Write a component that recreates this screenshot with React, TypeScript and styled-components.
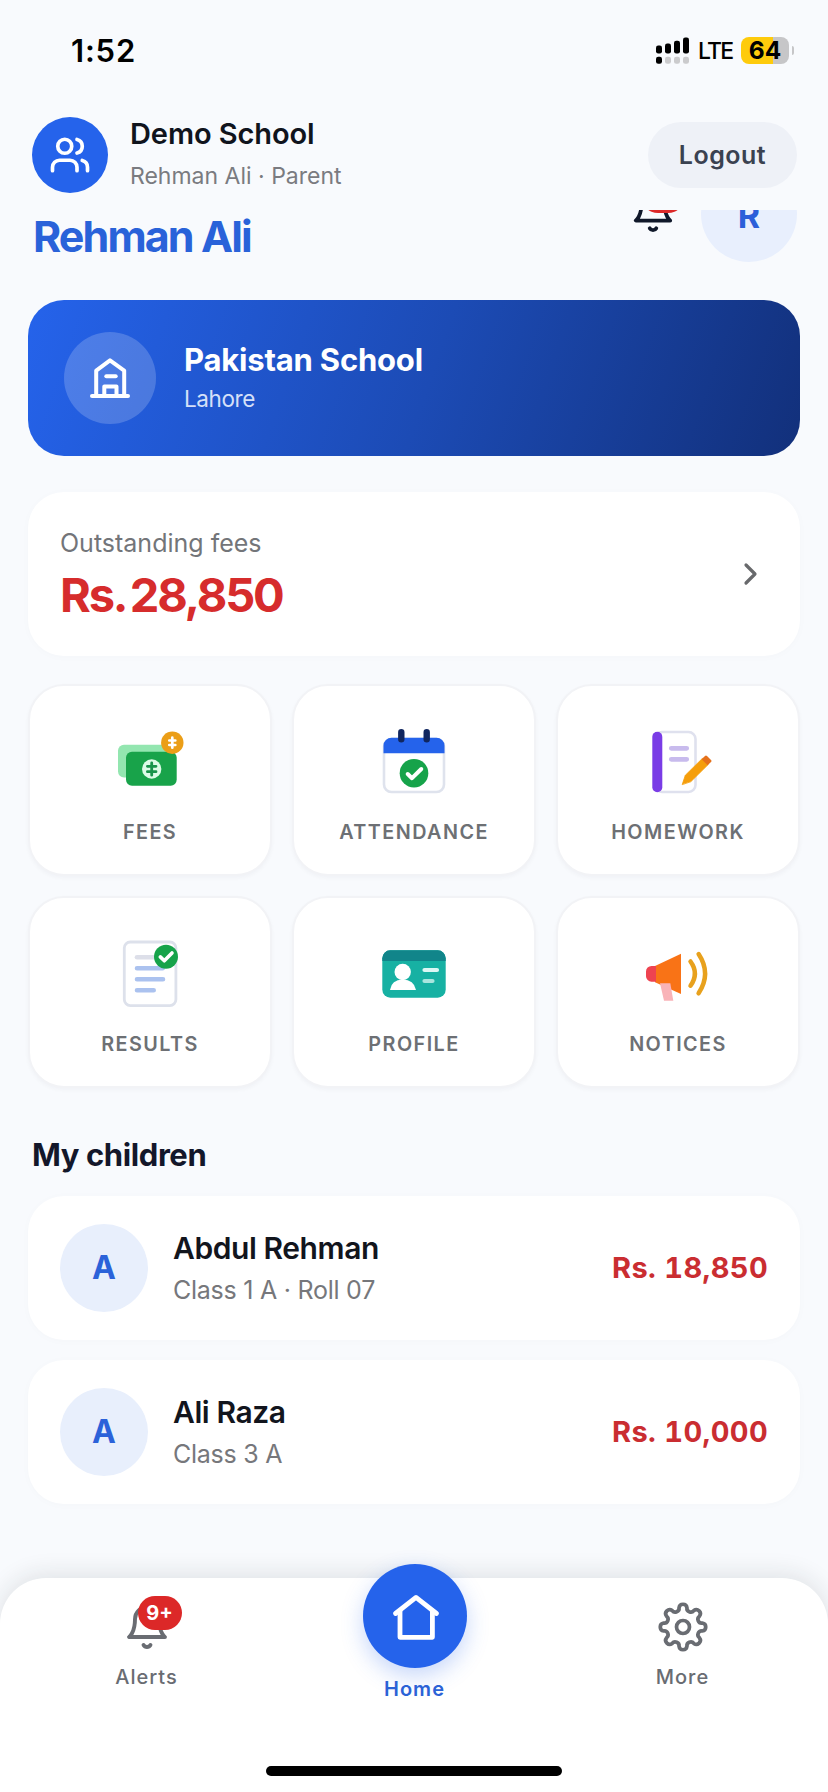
import React from 'react';
import styled, { createGlobalStyle } from 'styled-components';

const GlobalStyle = createGlobalStyle`
  *, *::before, *::after { box-sizing: border-box; }
  body {
    margin: 0;
    background: #f8fafd;
    font-family: Inter, 'Liberation Sans', sans-serif;
    -webkit-font-smoothing: antialiased;
  }
  svg { display: block; flex: none; overflow: visible; }
`;

const Screen = styled.div`
  display: flex;
  flex-direction: column;
  width: 828px;
  height: 1792px;
  overflow: hidden;
  background: #f8fafd;
`;

/* ---------- status bar ---------- */

const StatusBar = styled.div`
  display: flex;
  align-items: center;
  flex: none;
  height: 100px;
  padding: 0 34px 0 71px;
  color: #000;
`;

const Clock = styled.span`
  flex: 1;
  font-size: 31px;
  font-weight: 600;
  letter-spacing: 0.8px;
`;

const Carrier = styled.span`
  width: 43px;
  margin-left: 8px;
  padding-top: 1px;
  font-size: 23px;
  font-weight: 500;
  letter-spacing: -1.8px;
`;

const Battery = styled.div`
  width: 48px;
  height: 27px;
  border-radius: 8px;
  background: linear-gradient(90deg, #fecb0c 66%, #c6c6c8 66%);
  font-size: 24.5px;
  font-weight: 700;
  line-height: 27px;
  text-align: center;
`;

const BatteryTip = styled.div`
  width: 2.5px;
  height: 9px;
  margin-left: 2.5px;
  border-radius: 0 3px 3px 0;
  background: #c6c6c8;
`;

/* ---------- account header ---------- */

const Header = styled.header`
  display: flex;
  align-items: center;
  flex: none;
  height: 110px;
  padding: 0 31px 0 32px;
`;

const Disc = styled.div<{ $size: number; $bg: string }>`
  display: flex;
  align-items: center;
  justify-content: center;
  flex: none;
  width: ${(p) => p.$size}px;
  height: ${(p) => p.$size}px;
  border-radius: 50%;
  background: ${(p) => p.$bg};
`;

const Stack = styled.div<{ $gap: number; $lift?: number; $drop?: number }>`
  display: flex;
  flex-direction: column;
  flex: 1;
  margin-left: ${(p) => p.$gap}px;
  padding-top: ${(p) => p.$drop ?? 0}px;
  padding-bottom: ${(p) => p.$lift ?? 0}px;
`;

const Text = styled.span<{
  $size: number;
  $line: number;
  $color: string;
  $weight?: number;
  $track?: number;
}>`
  font-size: ${(p) => p.$size}px;
  line-height: ${(p) => p.$line}px;
  font-weight: ${(p) => p.$weight ?? 400};
  letter-spacing: ${(p) => p.$track ?? 0}px;
  color: ${(p) => p.$color};
  white-space: nowrap;
`;

const LogoutButton = styled.button`
  width: 149px;
  height: 66px;
  padding: 0;
  border: 0;
  border-radius: 33px;
  background: #eef1f7;
  color: #3a4250;
  font: 600 25px Inter, sans-serif;
  letter-spacing: 0.5px;
`;

/* ---------- scrolling content ---------- */

const Content = styled.main`
  flex: 1;
  min-height: 0;
  padding: 0 28px;
  overflow: hidden;
`;

const Greeting = styled.div`
  display: flex;
  align-items: center;
  height: 96px;
  margin-top: -44px;
  padding: 0 3px 0 5px;
`;

const GreetingName = styled.h1`
  flex: 1;
  align-self: flex-end;
  margin: 0;
  font-size: 43px;
  font-weight: 700;
  line-height: 52px;
  letter-spacing: -1.9px;
  color: #2962d9;
`;

const BellHolder = styled.div<{ $raise?: number }>`
  position: relative;
  margin-bottom: ${(p) => p.$raise ?? 0}px;
`;

const Badge = styled.span<{ $left: number; $top: number }>`
  position: absolute;
  left: ${(p) => p.$left}px;
  top: ${(p) => p.$top}px;
  width: 44px;
  height: 34px;
  border-radius: 17px;
  background: #dc2828;
  color: #fff;
  font-size: 20px;
  font-weight: 700;
  line-height: 34px;
  text-align: center;
`;

const GreetingAvatar = styled(Disc)`
  margin-left: 25px;
  padding-top: 3px;
`;

const SchoolCard = styled.section`
  display: flex;
  align-items: center;
  height: 156px;
  margin-top: 38px;
  padding: 0 36px;
  border-radius: 36px;
  background: linear-gradient(109deg, #2563eb 0%, #1c4bb5 52%, #12307b 100%);
`;

const Card = styled.section<{ $height: number; $mt: number }>`
  display: flex;
  align-items: center;
  height: ${(p) => p.$height}px;
  margin-top: ${(p) => p.$mt}px;
  padding: 0 32px;
  border-radius: 36px;
  background: #fff;
  box-shadow: 0 1px 10px rgba(30, 50, 70, 0.02);
`;

const FeesTotal = styled(Text)`
  word-spacing: -4px;
`;

const AmountDue = styled(Text)`
  font-variant-numeric: tabular-nums;
`;

const TileGrid = styled.div`
  display: grid;
  grid-template-columns: repeat(3, 1fr);
  grid-auto-rows: 192px;
  gap: 20px;
  margin-top: 28px;
`;

const Tile = styled.div`
  display: flex;
  flex-direction: column;
  align-items: center;
  padding-top: 40px;
  border: 2px solid #f2f3f6;
  border-radius: 36px;
  background: #fff;
  box-shadow: 0 2px 4px rgba(20, 30, 50, 0.035);
`;

const TileLabel = styled.span`
  margin-top: 20px;
  font-size: 19.8px;
  font-weight: 600;
  line-height: 28px;
  letter-spacing: 1.45px;
  color: #6d7074;
`;

const SectionTitle = styled.h2`
  margin: 47px 0 0 4px;
  font-size: 31px;
  font-weight: 700;
  line-height: 40px;
  letter-spacing: -0.4px;
  color: #13172a;
`;

/* ---------- bottom navigation ---------- */

const TabBar = styled.nav`
  display: grid;
  grid-template-columns: repeat(3, 268px);
  justify-content: center;
  position: relative;
  flex: none;
  height: 214px;
  border-radius: 46px 46px 0 0;
  background: #fff;
  box-shadow: 0 -4px 24px rgba(30, 32, 36, 0.11);
`;

const Tab = styled.div`
  display: flex;
  flex-direction: column;
  align-items: center;
  padding: 25px 0 0 1px;
`;

const TabLabel = styled.span<{ $active?: boolean; $mt: number }>`
  margin-top: ${(p) => p.$mt}px;
  font-size: 20px;
  font-weight: ${(p) => (p.$active ? 600 : 500)};
  line-height: 26px;
  letter-spacing: 1px;
  color: ${(p) => (p.$active ? '#2b62d6' : '#696c72')};
`;

const HomeButton = styled(Disc)`
  margin-top: -39px;
  box-shadow: 0 8px 22px rgba(37, 99, 235, 0.26);
`;

const HomeIndicator = styled.div`
  position: absolute;
  left: 266px;
  bottom: 16px;
  width: 296px;
  height: 10px;
  border-radius: 5px;
  background: #000;
`;

/* ---------- line icons ---------- */

const SignalIcon = () => (
  <svg width="34" height="27" viewBox="0 0 34 27">
    <rect x="0" y="8.5" width="6" height="8" rx="2.2" />
    <rect x="9" y="6.5" width="6" height="10" rx="2.2" />
    <rect x="18" y="3.8" width="6" height="12.7" rx="2.2" />
    <rect x="27" y="0.5" width="6" height="16" rx="2.2" />
    <rect x="0" y="19.7" width="6" height="7" rx="2.2" />
    {[9, 18, 27].map((x) => (
      <rect key={x} x={x} y="19.7" width="6" height="7" rx="2.2" fill="#cbcbcd" />
    ))}
  </svg>
);

const UsersIcon = () => (
  <svg width="42" height="42" viewBox="0 0 24 24" fill="none" stroke="#fff" strokeWidth="2.1" strokeLinecap="round" strokeLinejoin="round">
    <path d="M16 21v-2a4 4 0 0 0-4-4H6a4 4 0 0 0-4 4v2" />
    <circle cx="9" cy="7" r="4" />
    <path d="M22 21v-2a4 4 0 0 0-3-3.87" />
    <path d="M16 3.13a4 4 0 0 1 0 7.75" />
  </svg>
);

const BellIcon = ({ size, color }: { size: number; color: string }) => (
  <svg width={size} height={size} viewBox="0 0 24 24" fill="none" stroke={color} strokeWidth="1.95" strokeLinecap="round" strokeLinejoin="round">
    <path d="M18 8A6 6 0 0 0 6 8c0 7-3 9-3 9h18s-3-2-3-9" />
    <path d="M13.73 21a2 2 0 0 1-3.46 0" />
  </svg>
);

const SchoolIcon = () => (
  <svg width="44" height="44" viewBox="0 0 44 44" fill="none" stroke="#fff" strokeWidth="4" strokeLinecap="round" strokeLinejoin="round">
    <path d="M4 40H40" />
    <path d="M8.2 40V14.6L22 4.4L36.2 14.6V40" />
    <path d="M18.3 20.2H27.7" />
    <path d="M16.3 40V30.5H28.5V40" />
  </svg>
);

const ChevronIcon = () => (
  <svg width="14" height="24" viewBox="0 0 14 24" fill="none" stroke="#68696c" strokeWidth="3.2" strokeLinecap="round" strokeLinejoin="round">
    <path d="M3 3L12 12L3 21" />
  </svg>
);

const HomeIcon = () => (
  <svg width="48" height="52" viewBox="0 0 48 52" fill="none" stroke="#fff" strokeWidth="4.8" strokeLinecap="round" strokeLinejoin="round">
    <path d="M4.5 23.5L25 7.4L45.5 23.5" />
    <path d="M9 21V47.3H41.4V21" />
  </svg>
);

const gearOutline = () => {
  const ring = 19.7;
  const half = 11.6;
  const at = (deg: number) => {
    const a = ((deg - 90) * Math.PI) / 180;
    return `${(24 + ring * Math.cos(a)).toFixed(2)} ${(24 + ring * Math.sin(a)).toFixed(2)}`;
  };
  let d = `M${at(-half)}`;
  for (let i = 0; i < 8; i += 1) {
    const mid = i * 45;
    d += `A4 4 0 0 1 ${at(mid + half)}A3.85 3.85 0 0 0 ${at(mid + 45 - half)}`;
  }
  return `${d}Z`;
};

const GearIcon = () => (
  <svg width="48" height="48" viewBox="0 0 48 48" fill="none" stroke="#696c72" strokeWidth="3.7" strokeLinejoin="round">
    <path d={gearOutline()} />
    <circle cx="24" cy="24" r="6.5" />
  </svg>
);

/* ---------- tile illustrations ---------- */

const Art = ({ children }: { children: React.ReactNode }) => (
  <svg width="72" height="72" viewBox="0 0 72 72" fill="none" strokeLinecap="round" strokeLinejoin="round">
    {children}
  </svg>
);

const FeesArt = () => (
  <Art>
    <rect x="4" y="18.7" width="52" height="32.8" rx="6" fill="#93e6b0" />
    <rect x="12" y="25.7" width="50.7" height="34" rx="6" fill="#18a34a" />
    <circle cx="37.7" cy="43" r="9.7" fill="#dcfbe7" />
    <path d="M37.7 37V49.2M33.4 40.3H42M33.4 45.7H42" stroke="#18934a" strokeWidth="2.8" />
    <circle cx="58.3" cy="16.7" r="11.2" fill="#eb9e17" />
    <path d="M58.3 11.7V21.7M55.3 14.5H61.3M55.3 19H61.3" stroke="#fff" strokeWidth="2.7" />
  </Art>
);

const AttendanceArt = () => (
  <Art>
    <rect x="6" y="13" width="60" height="53" rx="7.5" fill="#fff" stroke="#dfe3ed" strokeWidth="2.6" />
    <path d="M5.5 27.3V19.5A8 8 0 0 1 13.5 11.7H58.5A8 8 0 0 1 66.5 19.5V27.3Z" fill="#2563eb" />
    <path d="M23.3 6.2V13.3M48.7 6.2V13.3" stroke="#10265f" strokeWidth="6.4" />
    <circle cx="36" cy="47.2" r="14.3" fill="#16a34a" />
    <path d="M29.7 48L34 52.2L43.3 43" stroke="#fff" strokeWidth="4" />
  </Art>
);

const HomeworkArt = () => (
  <Art>
    <rect x="13" y="6" width="40.5" height="60" rx="7" fill="#fff" stroke="#dfe1ee" strokeWidth="2.6" />
    <rect x="10.3" y="5.7" width="10" height="60.6" rx="5" fill="#7a3ce6" />
    <path d="M29.3 22.3H44.7M29.3 33.3H44.7" stroke="#c8bbed" strokeWidth="4.8" />
    <path d="M40.3 58.3L43.3 49.3L60.3 32.5L66.2 38.5L49 55.5Z" fill="#f59e0b" stroke="#f59e0b" strokeWidth="0.8" />
    <path d="M59.6 33.2L63 29.9Q64 29.1 65 30L69 34Q70 35 69 36L65.6 39.2Z" fill="#e5711b" />
  </Art>
);

const ResultsArt = () => (
  <Art>
    <rect x="10.3" y="4" width="51.6" height="63.6" rx="6" fill="#fff" stroke="#dde1eb" strokeWidth="2.8" />
    <path d="M23 19.3H42" stroke="#dddfe9" strokeWidth="4.6" />
    <path d="M23 30.3H48.7M23 41.3H49M23 52.3H39.7" stroke="#abc2ef" strokeWidth="4.6" />
    <circle cx="52" cy="18.7" r="12" fill="#16a34a" />
    <path d="M46.3 18.9L50.3 22.8L58 15" stroke="#fff" strokeWidth="3.6" />
  </Art>
);

const ProfileArt = () => (
  <Art>
    <rect x="4.3" y="12.3" width="63.4" height="47.4" rx="8" fill="#17b1a3" />
    <path d="M4.3 23V20.3A8 8 0 0 1 12.3 12.3H59.7A8 8 0 0 1 67.7 20.3V23Z" fill="#11858a" />
    <circle cx="24.7" cy="34" r="8.2" fill="#fff" />
    <path d="M12 52Q13.5 41.5 24.7 41.5Q36 41.5 38 52Z" fill="#fff" />
    <path d="M46.5 32H59" stroke="#dcf7f4" strokeWidth="4.2" />
    <path d="M46.5 43H54.5" stroke="#a9e5de" strokeWidth="4.2" />
  </Art>
);

const NoticesArt = () => (
  <Art>
    <path d="M13 28L39 15.7V56L13 44.3Z" fill="#f97316" />
    <path d="M14 28H9.5A5.5 5.5 0 0 0 4 33.5V38.2A5.5 5.5 0 0 0 9.5 43.7H14Z" fill="#ee4350" />
    <path d="M18 45.3H28.3L31.3 62.8H22Z" fill="#f9b3b8" />
    <path d="M48.5 23.5Q57.3 35.5 48.5 47.7" stroke="#e8a11d" strokeWidth="4.5" />
    <path d="M56.6 16Q69.6 35.5 56.6 55.3" stroke="#e8a11d" strokeWidth="4.5" />
  </Art>
);

const tiles = [
  { label: 'FEES', Icon: FeesArt },
  { label: 'ATTENDANCE', Icon: AttendanceArt },
  { label: 'HOMEWORK', Icon: HomeworkArt },
  { label: 'RESULTS', Icon: ResultsArt },
  { label: 'PROFILE', Icon: ProfileArt },
  { label: 'NOTICES', Icon: NoticesArt },
];

const children = [
  { initial: 'A', name: 'Abdul Rehman', detail: 'Class 1 A · Roll 07', due: 'Rs. 18,850' },
  { initial: 'A', name: 'Ali Raza', detail: 'Class 3 A', due: 'Rs. 10,000' },
];

export default function App() {
  return (
    <>
      <GlobalStyle />
      <Screen>
        <StatusBar>
          <Clock>1:52</Clock>
          <SignalIcon />
          <Carrier>LTE</Carrier>
          <Battery>64</Battery>
          <BatteryTip />
        </StatusBar>

        <Header>
          <Disc $size={76} $bg="#2563eb">
            <UsersIcon />
          </Disc>
          <Stack $gap={22} $lift={1}>
            <Text $size={29} $line={42} $weight={600} $track={-0.1} $color="#10141d">Demo School</Text>
            <Text $size={23} $line={42} $color="#7a7b80">Rehman Ali · Parent</Text>
          </Stack>
          <LogoutButton>Logout</LogoutButton>
        </Header>

        <Content>
          <Greeting>
            <GreetingName>Rehman Ali</GreetingName>
            <BellHolder $raise={7}>
              <BellIcon size={46} color="#10182a" />
              <Badge $left={11} $top={-9} />
            </BellHolder>
            <GreetingAvatar $size={96} $bg="#e8effd">
              <Text $size={34} $line={40} $weight={700} $color="#2b5fd9">R</Text>
            </GreetingAvatar>
          </Greeting>

          <SchoolCard>
            <Disc $size={92} $bg="rgba(255, 255, 255, 0.19)">
              <SchoolIcon />
            </Disc>
            <Stack $gap={28} $drop={2}>
              <Text $size={31} $line={39} $weight={700} $track={-0.2} $color="#ffffff">Pakistan School</Text>
              <Text $size={22.5} $line={39} $track={-0.4} $color="#d5e0f8">Lahore</Text>
            </Stack>
          </SchoolCard>

          <Card $height={164} $mt={36}>
            <Stack $gap={0} $lift={10}>
              <Text $size={25} $line={52} $color="#737579">Outstanding fees</Text>
              <FeesTotal $size={47} $line={52} $weight={700} $track={-2.2} $color="#d62c2c">Rs. 28,850</FeesTotal>
            </Stack>
            <Disc $size={36} $bg="transparent">
              <ChevronIcon />
            </Disc>
          </Card>

          <TileGrid>
            {tiles.map(({ label, Icon }) => (
              <Tile key={label}>
                <Icon />
                <TileLabel>{label}</TileLabel>
              </Tile>
            ))}
          </TileGrid>

          <SectionTitle>My children</SectionTitle>
          {children.map((child, i) => (
            <Card key={child.name} $height={144} $mt={i === 0 ? 21 : 20}>
              <Disc $size={88} $bg="#e8effc">
                <Text $size={32} $line={40} $weight={700} $color="#2b62d9">{child.initial}</Text>
              </Disc>
              <Stack $gap={25} $drop={2}>
                <Text $size={30} $line={42} $weight={600} $track={-0.42} $color="#12151d">{child.name}</Text>
                <Text $size={25} $line={42} $track={-0.25} $color="#76777b">{child.detail}</Text>
              </Stack>
              <AmountDue $size={29} $line={42} $weight={700} $track={0.35} $color="#ca2d31">{child.due}</AmountDue>
            </Card>
          ))}
        </Content>

        <TabBar>
          <Tab>
            <BellHolder>
              <BellIcon size={48} color="#696c72" />
              <Badge $left={15} $top={-7}>9+</Badge>
            </BellHolder>
            <TabLabel $mt={13}>Alerts</TabLabel>
          </Tab>
          <Tab>
            <HomeButton $size={104} $bg="#2563eb">
              <HomeIcon />
            </HomeButton>
            <TabLabel $active $mt={8}>Home</TabLabel>
          </Tab>
          <Tab>
            <GearIcon />
            <TabLabel $mt={13}>More</TabLabel>
          </Tab>
          <HomeIndicator />
        </TabBar>
      </Screen>
    </>
  );
}
